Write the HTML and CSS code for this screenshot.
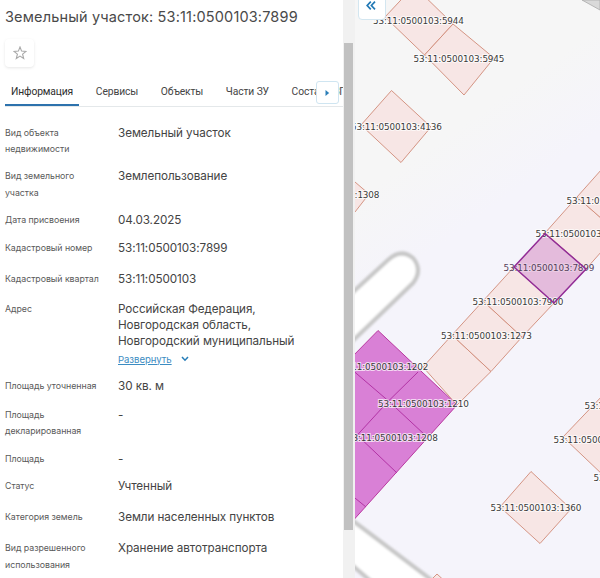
FILE: index.html
```html
<!DOCTYPE html>
<html lang="ru">
<head>
<meta charset="utf-8">
<title>Земельный участок</title>
<link rel="stylesheet" href="styles.css">
</head>
<body>
<div class="app">
  <aside class="panel">
    <h1 class="title">Земельный участок: 53:11:0500103:7899</h1>
    <button class="favorite" aria-label="Избранное">
      <svg width="14" height="14" viewBox="0 0 14 14"><path d="M7 1 L8.6 5.1 L13 5.4 L9.6 8.2 L10.7 12.5 L7 10.1 L3.3 12.5 L4.4 8.2 L1 5.4 L5.4 5.1 Z" fill="none" stroke="#a8a8a8" stroke-width="1.1"/></svg>
    </button>
    <nav class="tabs">
      <a class="tab tab-active">Информация</a>
      <a class="tab">Сервисы</a>
      <a class="tab">Объекты</a>
      <a class="tab">Части ЗУ</a>
      <a class="tab">Состав ЕЗП</a>
      <button class="tabs-next" aria-label="Далее"><svg width="5" height="8" viewBox="0 0 5 8"><path d="M.5 1 L4.2 4 L.5 7 Z" fill="#2c7fb8"/></svg></button>
    </nav>
    <dl class="info">
      <dt>Вид объекта<br>недвижимости</dt><dd>Земельный участок</dd>
      <dt>Вид земельного<br>участка</dt><dd>Землепользование</dd>
      <dt>Дата присвоения</dt><dd>04.03.2025</dd>
      <dt>Кадастровый номер</dt><dd>53:11:0500103:7899</dd>
      <dt>Кадастровый квартал</dt><dd>53:11:0500103</dd>
      <dt>Адрес</dt><dd>Российская Федерация,<br>Новгородская область,<br>Новгородский муниципальный
        <div class="expand"><a>Развернуть</a><svg width="8" height="6" viewBox="0 0 8 6"><path d="M1 1 L4 4.2 L7 1" fill="none" stroke="#267db8" stroke-width="1.5"/></svg></div></dd>
      <dt>Площадь уточненная</dt><dd>30 кв. м</dd>
      <dt>Площадь<br>декларированная</dt><dd>-</dd>
      <dt>Площадь</dt><dd>-</dd>
      <dt>Статус</dt><dd>Учтенный</dd>
      <dt>Категория земель</dt><dd>Земли населенных пунктов</dd>
      <dt>Вид разрешенного<br>использования</dt><dd>Хранение автотранспорта</dd>
    </dl>
  </aside>
  <div class="scrollbar"><div class="thumb"></div></div>
  <main class="map">
    <svg class="canvas" viewBox="355 0 245 578" width="245" height="578">
      <defs>
        <linearGradient id="ground" gradientUnits="userSpaceOnUse" x1="440" y1="140" x2="490" y2="210">
          <stop offset="0" stop-color="#f6f6f6"/><stop offset="1" stop-color="#f5f4fb"/>
        </linearGradient>
        <filter id="soft"><feGaussianBlur stdDeviation="1.3"/></filter>
      </defs>
      <rect x="355" width="245" height="578" fill="url(#ground)"/>
      <path d="M582 0 L600 10 V0Z" fill="#d9d9d9" stroke="#aaa" stroke-width=".8"/>
      <g class="road" filter="url(#soft)">
        <path d="M340 304 L388 260 Q401 248 413 258 Q423 270 413 283 L340 353 Z"/>
        <path d="M340 511 L450 594 H386 L340 555 Z"/>
      </g>
      <g class="parcel">
        <path d="M414 -14 L453 24 L424.500 55 L385 17 Z"/>
        <path d="M453 24 L494 58 L464 95 L424.500 55 Z"/>
        <path d="M391.500 90.500 L431 127 L401 162.500 L361 125 Z"/>
        <path d="M340 170 L355 182 L369 194 L355 212 L340 220 Z"/>
        <path d="M423 367 L452 335 L491 371.500 L457 405 Z"/>
        <path d="M452 335 L483 301 L522 337 L491 371.500 Z"/>
        <path d="M483 301 L514 267 L554 303 L522 337 Z"/>
        <path d="M545 233 L577 197 L618 233 L586 269 Z"/>
        <path d="M577 197 L610 160 L650 198 L618 233 Z"/>
        <path d="M563 437 L604 394 L640 440 L604 476 Z"/>
        <path d="M531 471.500 L571 509 L540 543.500 L500 507 Z"/>
        <path d="M437 574 L449 585 L437 596 L427 584 Z"/>
      </g>
      <path class="block" d="M378 330.500 L457 405 L350 524 V359 Z"/>
      <path class="block-lines" d="M350 368 L388.500 401 L425 435 M418 372 L388.500 401 L350 443 M357 435 L397 473 M350 494 L366 507"/>
      <path class="selected-fill" d="M545 233.500 L586 269 L554 303 L514 267 Z"/>
      <g class="labels">
        <text x="373" y="24.400" textLength="91">53:11:0500103:5944</text>
        <text x="413.500" y="62.200" textLength="91">53:11:0500103:5945</text>
        <text x="351" y="130.200" textLength="91">53:11:0500103:4136</text>
        <text x="288.500" y="198.200" textLength="91">53:11:0500103:1308</text>
        <text x="566.500" y="204" textLength="91">53:11:0500103:7902</text>
        <text x="535.500" y="237.400" textLength="91">53:11:0500103:7901</text>
        <text class="label-soft" x="503.500" y="271.400" textLength="91">53:11:0500103:7899</text>
        <text x="472.500" y="305.400" textLength="91">53:11:0500103:7900</text>
        <text x="441" y="339.400" textLength="91">53:11:0500103:1273</text>
        <text x="337.500" y="370" textLength="91">53:11:0500103:1202</text>
        <text x="378" y="407.400" textLength="91">53:11:0500103:1210</text>
        <text x="347" y="441.400" textLength="91">53:11:0500103:1208</text>
        <text x="584.500" y="409.400" textLength="91">53:11:0500103:1361</text>
        <text x="553.500" y="443.300" textLength="91">53:11:0500103:1362</text>
        <text x="593.500" y="481.300" textLength="91">53:11:0500103:1363</text>
        <text x="490.500" y="511.400" textLength="91">53:11:0500103:1360</text>
      </g>
      <path class="selected" d="M545 233.500 L586 269 L554 303 L514 267 Z"/>
    </svg>
    <button class="collapse" aria-label="Свернуть"><svg width="10" height="9" viewBox="0 0 10 9"><path d="M4.800 .7 L1.200 4.500 L4.800 8.300 M9 .7 L5.400 4.500 L9 8.300" fill="none" stroke="#2279b5" stroke-width="1.700"/></svg></button>
  </main>
</div>
</body>
</html>
```
FILE: styles.css
```css
* { box-sizing: border-box; }
body { margin: 0; font-family: Inter, "Liberation Sans", sans-serif; background: #fff; }
button { padding: 0; background: #fff; font: inherit; }
.app { display: flex; width: 600px; height: 578px; overflow: hidden; }

.panel { width: 343px; flex: none; display: flex; flex-direction: column; overflow: hidden; }
.title { margin: 8px 0 0 5px; height: 18px; line-height: 18px; font-size: 14.5px; font-weight: 400; color: #4a4a4a; letter-spacing: .16px; white-space: nowrap; }
.favorite { margin: 13px 0 0 5px; width: 29px; height: 28px; border: 0; border-radius: 4px; box-shadow: 0 1px 3px rgba(0, 0, 0, .1); display: flex; align-items: center; justify-content: center; }
.favorite svg { display: block; }
.tabs { position: relative; margin: 12px 0 0 5px; height: 28px; flex: none; display: flex; gap: 5px; border-bottom: 1px solid #e4e8ea; }
.tab { flex: none; height: 27px; padding: 0 6px; margin-right: 5.7px; line-height: 25px; font-family: Roboto, sans-serif; font-size: 10.3px; letter-spacing: -.12px; color: #444; white-space: nowrap; }
.tab-active { border-bottom: 2px solid #2d72ad; color: #2c2c2c; }
.tabs-next { position: absolute; left: 311px; top: 2px; width: 23px; height: 23px; border: 1px solid #cfe5f1; border-radius: 3px; display: flex; align-items: center; justify-content: center; }

.info { margin: 17.5px 0 0 5px; display: grid; grid-template-columns: 113px 1fr; grid-template-rows: 43.5px 43.5px 28.5px 30.5px 30.5px 77px 28.5px 44px 27.5px 31px 31px 38px; line-height: 16.2px; }
.info dt { padding-top: .4px; font-size: 8.8px; letter-spacing: -.04px; color: #5a5a5a; white-space: nowrap; }
.info dd { margin: 0; font-size: 11.7px; letter-spacing: -.07px; color: #444; white-space: nowrap; }
.expand { display: flex; align-items: center; gap: 9px; margin-top: 2px; font-size: 9.6px; line-height: 15px; color: #3b8cc2; }
.expand a { text-decoration: underline; }

.scrollbar { width: 12px; flex: none; padding: 43px 2px 0 1px; background: #f1f1f1; }
.thumb { height: 487px; background: #c1c1c1; }

.map { position: relative; width: 245px; flex: none; }
.canvas { display: block; }
.collapse { position: absolute; left: 3px; top: -7px; width: 28px; height: 27px; border: 1px solid #d3e6f0; border-radius: 4px; display: flex; align-items: center; justify-content: center; }
.collapse svg { position: relative; left: -1px; top: -1px; }
.road path { fill: #fff; stroke: #c8c8c8; stroke-width: 4.2; }
.parcel path { fill: #f7e6e5; stroke: #d08a77; stroke-width: .9; }
.block { fill: #d980d6; stroke: #b8389f; stroke-width: 1; }
.block-lines { fill: none; stroke: #b233a5; stroke-width: 1; }
.selected-fill { fill: #e4bbdc; }
.selected { fill: none; stroke: #922c96; stroke-width: 1.5; }
.labels text { font-family: "DejaVu Sans", sans-serif; font-size: 8.9px; fill: #3a3a3a; stroke: rgba(255, 255, 255, .7); stroke-width: 2px; paint-order: stroke; }
.labels .label-soft { fill: #54405a; stroke: rgba(255, 255, 255, .25); }
```
